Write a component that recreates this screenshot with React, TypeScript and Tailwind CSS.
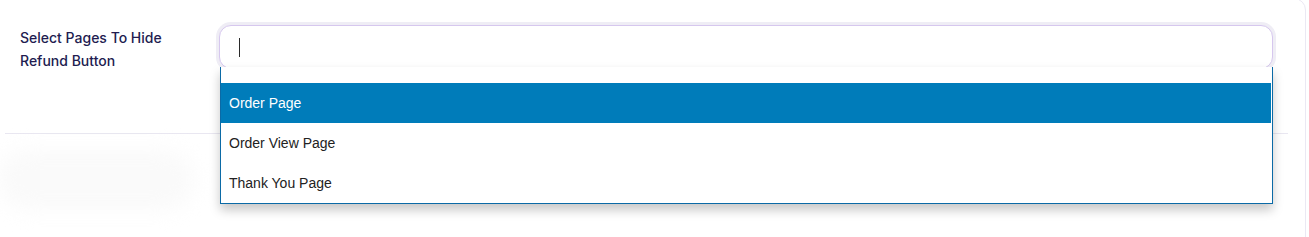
import React from "react";

const pages = ["Order Page", "Order View Page", "Thank You Page"];

export default function App() {
  const active = 0;

  return (
    <div className="w-[1309px] h-[237px] overflow-hidden bg-white">
      <div className="-ml-[12px] -mt-[2px] w-[1318px] h-[260px] rounded-xl border border-[#ebe8f3] bg-white">
        <div className="flex items-start h-[134px] pt-[26px] pl-[31px]">
          <label
            className="w-[199px] pt-[1px] text-[14px] leading-[23px] font-medium text-[#221c50]"
            style={{ fontFamily: "Inter, 'Noto Sans', sans-serif" }}
          >
            Select Pages To Hide
            <br />
            Refund Button
          </label>

          <div className="relative w-[1054px]">
            <div className="flex items-center h-[44px] rounded-xl border border-[#d6c7ee] bg-white shadow-[0_0_0_3px_#efedf5] pl-[19px]">
              <span className="w-px h-[19px] bg-[#2a2a2a]" />
            </div>

            <ul
              className="absolute left-[1px] top-[42px] w-[1053px] bg-white border-x border-b border-[#0b6aa6] pt-[16px] shadow-[0_6px_10px_rgba(0,0,0,0.22)] z-10"
              style={{ fontFamily: "'Liberation Sans', Arial, sans-serif" }}
            >
              {pages.map((p, i) => (
                <li
                  key={p}
                  className={`flex items-center h-[40px] pl-[8px] text-[14px] ${
                    i === active ? "bg-[#007cba] text-white mr-[1px]" : "text-[#222222]"
                  }`}
                >
                  {p}
                </li>
              ))}
            </ul>
          </div>
        </div>

        <div className="h-px ml-[16px] mr-[17px] bg-[#e9e7f1]" />

        <div className="mt-[16px] ml-[10px] w-[195px] h-[60px] rounded-full bg-[#fafafa] blur-[10px]" />
      </div>
    </div>
  );
}
